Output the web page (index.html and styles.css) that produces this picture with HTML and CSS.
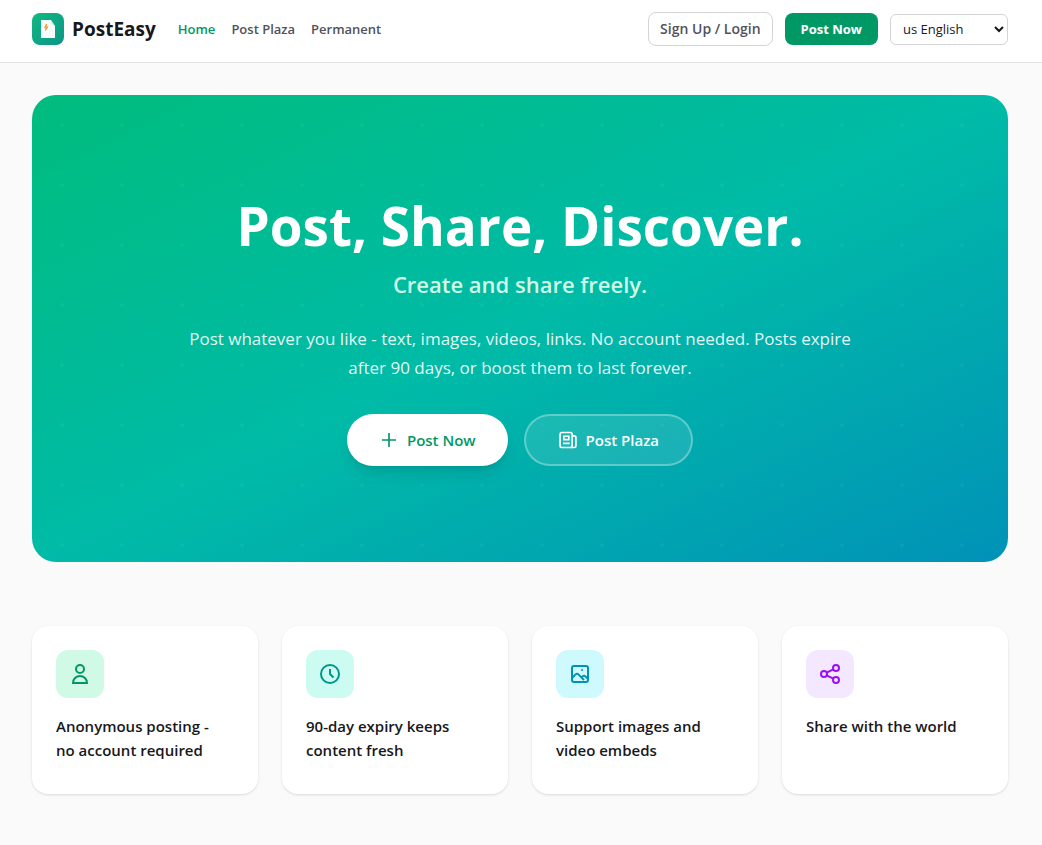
FILE: index.html
```html
<!DOCTYPE html>
<html lang="en">
<head>
<meta charset="utf-8">
<meta name="viewport" content="width=device-width, initial-scale=1">
<title>PostEasy</title>
<link rel="stylesheet" href="styles.css">
</head>
<body>
<header class="header">
  <a class="brand" href="#">
    <svg class="brand-logo" viewBox="0 0 32 32" aria-hidden="true">
      <defs><linearGradient id="logo" x1="0" y1="0" x2="1" y2="1"><stop offset="0" stop-color="#10b981"/><stop offset="1" stop-color="#0d9488"/></linearGradient></defs>
      <rect width="32" height="32" rx="8" fill="url(#logo)"/>
      <path d="M9 7h10l4 6v12H9z" fill="#fff" fill-opacity=".96"/>
      <path d="M18.500 7l4.500 6-3-2z" fill="#a7f3d0"/>
      <path d="M14.500 11l-2 3.800h1.600l-.6 2.700 2.400-3.700h-1.700z" fill="#fbbf24" stroke="#f97316" stroke-width=".6"/>
    </svg>
    <span class="brand-name">PostEasy</span>
  </a>
  <nav class="nav">
    <a class="nav-link nav-link-active" href="#">Home</a>
    <a class="nav-link" href="#">Post Plaza</a>
    <a class="nav-link" href="#">Permanent</a>
  </nav>
  <div class="actions">
    <button class="login" type="button">Sign Up / Login</button>
    <button class="post" type="button">Post Now</button>
    <select class="language" aria-label="Language"><option>us English</option></select>
  </div>
</header>
<main class="main">
  <section class="hero">
    <h1 class="hero-title">Post, Share, Discover.</h1>
    <p class="hero-subtitle">Create and share freely.</p>
    <p class="hero-text">Post whatever you like - text, images, videos, links. No account needed. Posts expire after 90 days, or boost them to last forever.</p>
    <div class="hero-actions">
      <a class="cta cta-primary" href="#">
        <svg class="cta-icon" viewBox="0 0 24 24" fill="currentColor" aria-hidden="true"><path d="M11 11V3.500h2V11h7.500v2H13v7.500h-2V13H3.500v-2z"/></svg>
        Post Now
      </a>
      <a class="cta cta-outline" href="#">
        <svg class="cta-icon" viewBox="0 0 24 24" fill="none" stroke="currentColor" stroke-width="2" aria-hidden="true"><rect x="2.500" y="3" width="14.500" height="18" rx="2"/><path d="M17 7h2.500a2 2 0 0 1 2 2v10a2 2 0 0 1-2 2H15M7 7.500h6v4H7zM6 16h8"/></svg>
        Post Plaza
      </a>
    </div>
  </section>
  <section class="features" aria-label="Features">
    <article class="card">
      <div class="tile tile-emerald"><svg class="tile-icon" viewBox="0 0 24 24" aria-hidden="true"><circle cx="12" cy="7" r="4"/><path d="M5 21a7 7 0 0 1 14 0z"/></svg></div>
      <h2 class="card-title">Anonymous posting - <br>no account required</h2>
    </article>
    <article class="card">
      <div class="tile tile-teal"><svg class="tile-icon" viewBox="0 0 24 24" aria-hidden="true"><circle cx="12" cy="12" r="9"/><path d="M12 7v5l3.500 3.500"/></svg></div>
      <h2 class="card-title">90-day expiry keeps content fresh</h2>
    </article>
    <article class="card">
      <div class="tile tile-cyan"><svg class="tile-icon" viewBox="0 0 24 24" aria-hidden="true"><rect x="4" y="4" width="16" height="16" rx="2"/><path d="M4 16l3.600-3.600a2 2 0 0 1 2.800 0L16 18M14 15l.6-.6a2 2 0 0 1 2.800 0L20 17"/><circle class="tile-dot" cx="14" cy="8" r="1"/></svg></div>
      <h2 class="card-title">Support images and video embeds</h2>
    </article>
    <article class="card">
      <div class="tile tile-purple"><svg class="tile-icon" viewBox="0 0 24 24" aria-hidden="true"><circle cx="6" cy="12" r="3"/><circle cx="18" cy="6" r="3"/><circle cx="18" cy="18" r="3"/><path d="M8.700 10.700l6.600-3.400M8.700 13.300l6.600 3.400"/></svg></div>
      <h2 class="card-title">Share with the world</h2>
    </article>
  </section>
</main>
</body>
</html>
```
FILE: styles.css
```css
* { box-sizing: border-box; }
body {
  margin: 0;
  background: #fafafa;
  color: #18181b;
  font-family: "Open Sans", "Noto Sans", sans-serif;
}
a { color: inherit; text-decoration: none; }
h1, h2, p { margin: 0; }

.header {
  display: flex;
  align-items: center;
  padding: 12px 34px 16px 32px;
  background: #fff;
  border-bottom: 1px solid #e4e4e7;
}
.brand { display: flex; align-items: center; gap: 8px; }
.brand-logo { width: 32px; height: 32px; }
.brand-name { font-size: 19px; font-weight: 700; line-height: 28px; }
.nav { display: flex; gap: 16px; margin-left: 22px; }
.nav-link { font-size: 13px; font-weight: 600; line-height: 20px; color: #52525c; }
.nav-link-active { color: #009966; }
.actions { display: flex; align-items: center; gap: 12px; margin-left: auto; }
.login, .post, .language { font-family: inherit; font-size: 13px; line-height: 20px; border-radius: 8px; }
.login { padding: 6px 11px; font-size: 14px; font-weight: 600; color: #52525c; background: #fff; border: 1px solid #d4d4d8; }
.post { padding: 6px 16px; font-weight: 700; color: #fff; background: #009966; border: 0; }
.language { width: 118px; height: 31px; padding: 4px 0 4px 8px; color: #18181b; background: #fff; border: 1px solid #d4d4d8; border-radius: 6px; }

.main { padding: 32px 34px 50px 32px; }
.hero {
  display: flex;
  flex-direction: column;
  align-items: center;
  padding: 96px 64px;
  border-radius: 24px;
  text-align: center;
  color: #fff;
  background:
    radial-gradient(circle, rgba(255, 255, 255, 0.04) 2px, transparent 2px) 0 0 / 60px 60px,
    linear-gradient(to bottom right, #00bc7d, #00bba7, #0092b8);
}
.hero-title { font-size: 53px; font-weight: 700; line-height: 69px; }
.hero-subtitle { margin-top: 8px; font-size: 22px; font-weight: 600; line-height: 32px; color: #d0fae5; }
.hero-text { max-width: 672px; margin-top: 24px; font-size: 17px; line-height: 29px; color: rgba(255, 255, 255, 0.9); }
.hero-actions { display: flex; gap: 16px; margin-top: 32px; }
.cta { display: flex; align-items: center; gap: 8px; height: 52px; padding: 0 32px; border-radius: 26px; font-size: 15px; font-weight: 600; line-height: 24px; }
.cta-icon { width: 20px; height: 20px; }
.cta-primary { color: #009966; background: #fff; box-shadow: 0 10px 15px -3px rgba(0, 0, 0, 0.1), 0 4px 6px -4px rgba(0, 0, 0, 0.1); }
.cta-outline { color: #fff; background: rgba(255, 255, 255, 0.1); border: 2px solid rgba(255, 255, 255, 0.3); }

.features { display: grid; grid-template-columns: repeat(4, 1fr); gap: 24px; margin-top: 64px; }
.card { padding: 24px 24px 32px; background: #fff; border-radius: 16px; box-shadow: 0 1px 3px rgba(0, 0, 0, 0.1), 0 1px 2px -1px rgba(0, 0, 0, 0.1); }
.tile { display: grid; place-items: center; width: 48px; height: 48px; margin-bottom: 16px; border-radius: 12px; }
.tile-icon { width: 24px; height: 24px; fill: none; stroke: currentColor; stroke-width: 2; }
.tile-dot { fill: currentColor; stroke: none; }
.tile-emerald { color: #009966; background: #d0fae5; }
.tile-teal { color: #009689; background: #cbfbf1; }
.tile-cyan { color: #0092b8; background: #cefafe; }
.tile-purple { color: #9810fa; background: #f3e8ff; }
.card-title { font-size: 15px; font-weight: 600; line-height: 24px; }
```
